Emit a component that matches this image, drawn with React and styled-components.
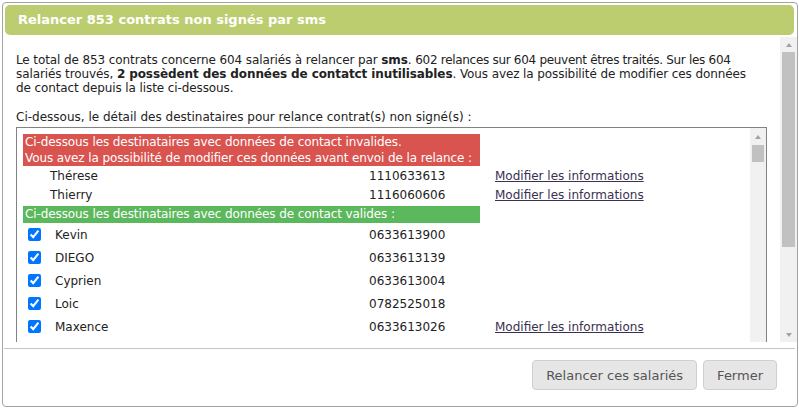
import React from 'react';
import styled, { createGlobalStyle } from 'styled-components';

const GlobalStyle = createGlobalStyle`
  html, body {
    margin: 0;
    padding: 0;
    background: #fff;
  }
  body {
    font-family: 'DejaVu Sans', Verdana, sans-serif;
    font-size: 12px;
    color: #222;
  }
`;

const Dialog = styled.div`
  margin: 2px;
  width: 796px;
  height: 405px;
  box-sizing: border-box;
  border: 1px solid #a3a3a3;
  border-radius: 4px;
  display: flex;
  flex-direction: column;
  background: #fff;
`;

const TitleBar = styled.div`
  margin: 2px 3px 2px 2px;
  height: 30px;
  line-height: 30px;
  padding-left: 13px;
  background: #bbcd6e;
  border-radius: 5px;
  color: #fff;
  font-weight: bold;
  font-size: 13px;
`;

/* barre de défilement dessinée (le navigateur headless masque les natives) */
const ScrollBar = styled.div`
  flex: none;
  width: ${(p) => p.$w}px;
  background: #f1f1f1;
  display: flex;
  flex-direction: column;
`;

const ScrollArrow = styled.div`
  flex: none;
  height: ${(p) => p.$h}px;
  display: flex;
  align-items: center;
  justify-content: center;
  &::after {
    content: '';
    border-left: 3.5px solid transparent;
    border-right: 3.5px solid transparent;
    ${(p) => (p.$down ? 'border-top' : 'border-bottom')}: 4px solid #a3a3a3;
  }
`;

const ScrollTrack = styled.div`
  flex: 1;
  min-height: 0;
`;

const Thumb = styled.div`
  height: ${(p) => p.$len}px;
  margin: 0 2px;
  background: #c1c1c1;
`;

const Body = styled.div`
  height: 305px;
  flex: none;
  display: flex;
`;

const BodyContent = styled.div`
  flex: 1;
  min-width: 0;
  overflow: hidden;
  padding: 16px 13px 0 13px;
`;

const Intro = styled.p`
  margin: 0;
  line-height: 14px;
  letter-spacing: -0.1px;
  white-space: nowrap;
`;

const Tight = styled.span`
  letter-spacing: -0.3px;
`;

const Label = styled.p`
  margin: 15px 0 3px;
  line-height: 14px;
`;

const ListBox = styled.div`
  width: 751px;
  height: 320px;
  box-sizing: border-box;
  border: 1px solid #828282;
  display: flex;
`;

const ListContent = styled.div`
  flex: 1;
  min-width: 0;
  overflow: hidden;
  padding: 6px 0 0 6px;
`;

const GroupHeader = styled.div`
  width: 457px;
  box-sizing: border-box;
  padding: 0 2px;
  line-height: 16px;
  white-space: nowrap;
  letter-spacing: -0.1px;
  color: #fff;
  background: ${(p) => (p.$valid ? '#5cb85c' : '#d9534f')};
  margin-top: ${(p) => (p.$valid ? '2px' : '0')};
  padding-bottom: ${(p) => (p.$valid ? '1px' : '0')};
`;

const Row = styled.div`
  display: grid;
  grid-template-columns: 27px 319px 126px auto;
  align-items: center;
  height: ${(p) => p.$h}px;
  white-space: nowrap;
`;

const Check = styled.input`
  margin: 0 0 0 5px;
  width: 13px;
  height: 13px;
  accent-color: #0075ff;
`;

const Name = styled.span`
  padding-left: ${(p) => p.$indent}px;
`;

const Phone = styled.span``;

const EditLink = styled.a`
  color: #3a3050;
  text-decoration: underline;
  cursor: pointer;
`;

const Footer = styled.div`
  margin: 6px 2px 0 1px;
  border-top: 1px solid #c4c4c4;
  padding: 11px 18px 0 0;
  display: flex;
  justify-content: flex-end;
  gap: 6px;
`;

const Button = styled.button`
  height: 30px;
  padding: 0 13px;
  border: 1px solid #cfcfcf;
  border-radius: 4px;
  background: #e6e6e6;
  color: #555;
  font-family: 'DejaVu Sans', Verdana, sans-serif;
  font-size: 13px;
  cursor: pointer;
`;

const invalid = [
  { name: 'Thérese', phone: '1110633613' },
  { name: 'Thierry', phone: '1116060606' },
];

const valid = [
  { name: 'Kevin', phone: '0633613900' },
  { name: 'DIEGO', phone: '0633613139' },
  { name: 'Cyprien', phone: '0633613004' },
  { name: 'Loic', phone: '0782525018' },
  { name: 'Maxence', phone: '0633613026', edit: true },
];

function Scroller({ w, arrow, thumb }) {
  return (
    <ScrollBar $w={w}>
      <ScrollArrow $h={arrow} />
      <ScrollTrack>
        <Thumb $len={thumb} />
      </ScrollTrack>
      <ScrollArrow $h={arrow} $down />
    </ScrollBar>
  );
}

export default function App() {
  return (
    <>
      <GlobalStyle />
      <Dialog>
        <TitleBar>Relancer 853 contrats non signés par sms</TitleBar>
        <Body>
          <BodyContent>
            <Intro>
              Le total de 853 contrats concerne 604 salariés à relancer par <b>sms</b>.{' '}
              <Tight>602 relances sur 604 peuvent êtres traités. Sur les 604</Tight>
              <br />
              salariés trouvés, <b>2 possèdent des données de contatct inutilisables</b>. Vous avez
              la possibilité de modifier ces données
              <br />
              de contact depuis la liste ci-dessous.
            </Intro>
            <Label>Ci-dessous, le détail des destinataires pour relance contrat(s) non signé(s) :</Label>
            <ListBox>
              <ListContent>
                <GroupHeader>
                  Ci-dessous les destinataires avec données de contact invalides.
                  <br />
                  Vous avez la possibilité de modifier ces données avant envoi de la relance :
                </GroupHeader>
                {invalid.map((r, i) => (
                  <Row key={'i' + i} $h={19}>
                    <span />
                    <Name $indent={0}>{r.name}</Name>
                    <Phone>{r.phone}</Phone>
                    <EditLink>Modifier les informations</EditLink>
                  </Row>
                ))}
                <GroupHeader $valid>Ci-dessous les destinataires avec données de contact valides :</GroupHeader>
                {valid.map((r, i) => (
                  <Row key={'v' + i} $h={23}>
                    <Check type="checkbox" defaultChecked />
                    <Name $indent={5}>{r.name}</Name>
                    <Phone>{r.phone}</Phone>
                    {r.edit ? <EditLink>Modifier les informations</EditLink> : <span />}
                  </Row>
                ))}
              </ListContent>
              <Scroller w={16} arrow={17} thumb={17} />
            </ListBox>
          </BodyContent>
          <Scroller w={17} arrow={15} thumb={195} />
        </Body>
        <Footer>
          <Button>Relancer ces salariés</Button>
          <Button>Fermer</Button>
        </Footer>
      </Dialog>
    </>
  );
}
